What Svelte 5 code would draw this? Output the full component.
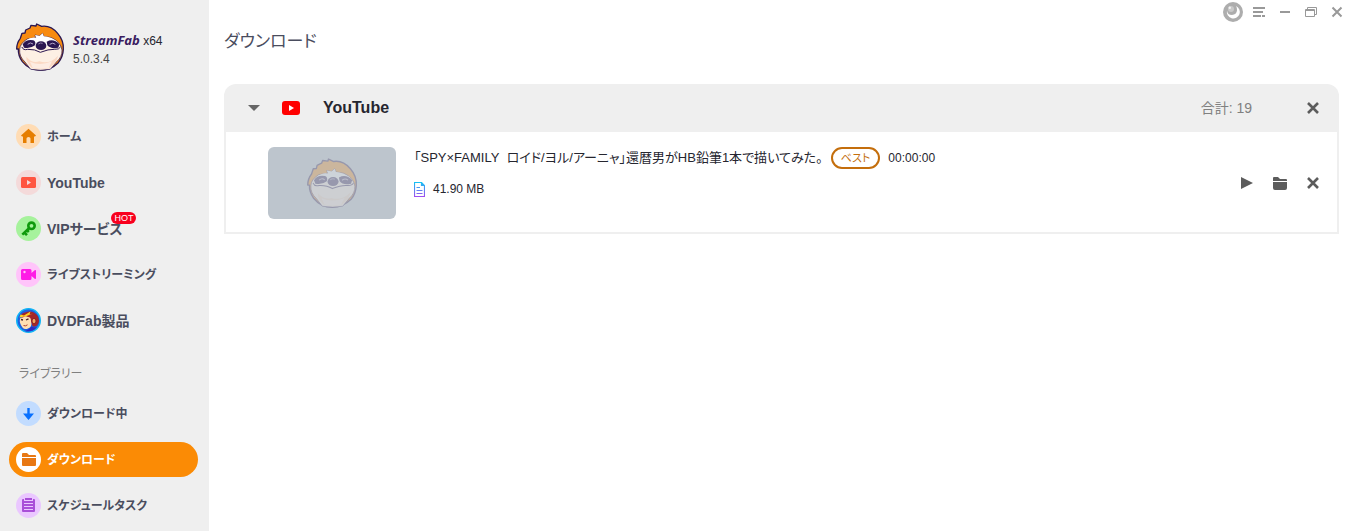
<script>
  const services = [
    { id: 'home', label: 'ホーム', kana: true },
    { id: 'youtube', label: 'YouTube' },
    { id: 'vip', label: 'VIPサービス', hot: true },
    { id: 'live', label: 'ライブストリーミング', kana: true },
    { id: 'dvdfab', label: 'DVDFab製品' }
  ];
  const library = [
    { id: 'downloading', label: 'ダウンロード中', kana: true },
    { id: 'downloaded', label: 'ダウンロード', kana: true },
    { id: 'schedule', label: 'スケジュールタスク', kana: true }
  ];
  let active = $state('downloaded');
  let open = $state(true);
</script>

{#snippet sloth()}
  <svg class="sloth" viewBox="15 15 150 150" aria-hidden="true">
    <path d="M20 96 Q20 78 31 64 L36 49 L45 48 L47 39 L60 33 L63 25 L78 27 L80 21 L95 28 Q122 24 143 49 Q162 71 160 97 Q159 120 145 137 Q121 160 91 160 Q58 160 37 134 Q24 116 25 96 Z" fill="#f88b10" stroke="#2b1751" stroke-width="4" stroke-linejoin="round" />
    <path d="M29 98 Q29 80 52 66 L77 62 L75 54 L88 57 L98 49 L101 58 L124 62 Q152 74 156 99 Q157 120 139 135 L121 157 Q91 162 62 157 L45 135 Q27 118 29 98 Z" fill="#fdf0e4" stroke="#2b1751" stroke-width="2" />
    <path d="M46 72 Q64 58 80 63 L75 54 L89 57 L98 49 L101 58 Q123 59 142 75 L133 88 L50 87 Z" fill="#fff" />
    <path d="M38 82 Q48 66 70 70 Q79 74 75 85 Q61 96 42 92 Z M110 74 Q131 63 148 82 L145 92 Q122 97 112 85 Z" fill="#2b1751" />
    <path d="M53 82 Q61 74 69 81 M119 82 Q129 75 136 82" fill="none" stroke="#b6a9cb" stroke-width="3" />
    <path d="M36 91 Q40 101 53 97 Q75 96 91 106 Q116 96 133 97 Q148 98 151 91" fill="none" stroke="#2b1751" stroke-width="3" stroke-linecap="round" />
    <ellipse cx="93" cy="86" rx="16" ry="13" fill="#2b1751" />
    <path d="M85 81 Q91 76 98 79" fill="none" stroke="#8f80aa" stroke-width="3" />
    <path d="M49 119 Q66 140 88 133 Q120 143 144 116 Q141 135 119 153 Q91 161 65 152 Q48 136 49 119 Z" fill="#fbd9c4" />
    <path d="M60 134 Q90 148 126 133 L116 153 Q90 158 68 152 Z" fill="#fdece2" />
  </svg>
{/snippet}

{#snippet cross()}
  <svg width="12" height="12" viewBox="0 0 12 12" aria-hidden="true"><path d="M1 1 11 11M11 1 1 11" fill="none" stroke="currentColor" stroke-width="2.6" /></svg>
{/snippet}

{#snippet navIcon(id)}
  <svg class="nav-icon" viewBox="0 0 25 25" aria-hidden="true">
    {#if id === 'home'}
      <circle cx="12.5" cy="12.5" r="12.5" fill="#ffdcb4" />
      <path d="M12.5 4.8 20 11.5 19 12.5H18V19H14.5V14.5Q14.5 13 12.5 13T10.5 14.5V19H7V12.5H6L5 11.5Z" fill="#e67e00" />
    {:else if id === 'youtube'}
      <circle cx="12.5" cy="12.5" r="12.5" fill="#f4dada" />
      <rect x="5" y="7" width="15" height="11" rx="1.5" fill="#ff5440" />
      <path d="M11 10v5l4-2.5Z" fill="#f4dada" />
    {:else if id === 'vip'}
      <circle cx="12.5" cy="12.5" r="12.5" fill="#a6f29c" />
      <circle cx="15.5" cy="9.8" r="3.2" fill="none" stroke="#0f9a0c" stroke-width="2.6" />
      <path d="M13 12.2 6.3 18.6M8.3 16.5 11 19.2M11 14.2 12.8 16" fill="none" stroke="#0f9a0c" stroke-width="2.6" />
    {:else if id === 'live'}
      <circle cx="12.5" cy="12.5" r="12.5" fill="#ffc4fa" />
      <path d="M6.5 7H14Q15.5 7 15.5 8.5V11L19 8Q20 7.6 20 9V16Q20 17.4 19 17L15.5 14V16.5Q15.5 18 14 18H6.5Q5 18 5 16.5V8.5Q5 7 6.5 7Z" fill="#ff1be6" />
      <circle cx="8.5" cy="10" r="1.2" fill="#ffc4fa" />
    {:else if id === 'dvdfab'}
      <circle cx="12.5" cy="12.5" r="11.7" fill="#1c5fe0" stroke="#10b4f6" stroke-width="1.6" />
      <path d="M4.5 9Q5 5 9 4.500Q15 2 20 6Q24 10 22.500 15Q20 20 16.500 18L15 14Z" fill="#a3262a" />
      <path d="M4 11Q4 9 7 9.500Q9 7.500 12 9Q15 9 15 13Q16.500 19 12 20.500Q8.500 22 6.500 19.500Q3 15 4 11Z" fill="#ffe0b2" />
      <path d="M3.500 9.500 4.500 6.500 8 7.500 14.500 3.500 13.500 6.500 17 5.500Q11 8.500 3.500 9.500Z" fill="#ffd21f" />
      <path d="M5 11.500 7 12M10 12 12.500 10.800" fill="none" stroke="#4a2020" stroke-width="1.300" />
      <path d="M7.500 17.500Q9.500 18.500 11.500 16.800" fill="none" stroke="#b04030" />
      <ellipse cx="18" cy="13" rx="2" ry="2.600" fill="#f3a765" stroke="#7c1a20" stroke-width=".8" />
      <path d="M9 23.500Q14 21 15.500 18.500Q19 20 21 19Q17 24 9 23.500Z" fill="#2d2bc0" />
    {:else if id === 'downloading'}
      <circle cx="12.5" cy="12.5" r="12.5" fill="#c2dcff" />
      <path d="M11.3 7H13.7V12.5H18L12.5 19 7 12.5H11.3Z" fill="#0870ff" />
    {:else if id === 'downloaded'}
      <circle cx="12.5" cy="12.5" r="12.5" fill="#fff" />
      <path d="M6 7Q6 6 7 6H11L13 8H19Q20 8 20 9V10H6Z M6 11H20V18Q20 19 19 19H7Q6 19 6 18Z" fill="#e87813" />
    {:else}
      <circle cx="12.5" cy="12.5" r="12.5" fill="#eac7ff" />
      <path d="M7 6H8V8H17V6H18Q19 6 19 7V18Q19 19 18 19H7Q6 19 6 18V7Q6 6 7 6ZM9 5H16V7H9Z" fill="#a94fd8" />
      <path d="M8 10.5H17M8 13.5H17M8 16.5H17" stroke="#eac7ff" />
    {/if}
  </svg>
{/snippet}

{#snippet navItem(item)}
  <li>
    <button class="nav-item" class:active={active === item.id} onclick={() => (active = item.id)}>
      {@render navIcon(item.id)}
      <span class="nav-label" class:kana={item.kana}>{item.label}{#if item.hot}<span class="hot">HOT</span>{/if}</span>
    </button>
  </li>
{/snippet}

<div class="app">
  <aside>
    <div class="brand">
      {@render sloth()}
      <div class="brand-text">
        <div><b>StreamFab</b> x64</div>
        <div class="version">5.0.3.4</div>
      </div>
    </div>
    <nav>
      <ul>
        {#each services as item}{@render navItem(item)}{/each}
      </ul>
      <h2>ライブラリー</h2>
      <ul>
        {#each library as item}{@render navItem(item)}{/each}
      </ul>
    </nav>
  </aside>

  <main>
    <div class="titlebar">
      <button aria-label="Theme">
        <svg width="20" height="20" viewBox="0 0 20 20"><circle cx="10" cy="10" r="10" fill="#adadad" /><path d="M13 4A6.500 6.500 0 1 1 4 8.500Q4.500 13 9 13Q13.500 12.500 14 8.500Q14.300 6 13 4Z" fill="#fff" /><circle cx="8" cy="7" r="3" fill="#c9c9c9" /><circle cx="6.800" cy="5.800" r="1.200" fill="#f2f2f2" /></svg>
      </button>
      <button aria-label="Menu">
        <svg width="12" height="12" viewBox="0 0 12 12"><path d="M0 2H12M0 6H10M0 10H8M9 10H12" stroke="#999" stroke-width="2" /></svg>
      </button>
      <button aria-label="Minimize">
        <svg width="12" height="12" viewBox="0 0 12 12"><path d="M1 6H11" stroke="#999" stroke-width="2" /></svg>
      </button>
      <button aria-label="Restore">
        <svg width="12" height="12" viewBox="0 0 12 12"><path d="M2.5 3V1.5H11.5V8.500H10M.5 3.500H9.500V10.500H.5ZM.5 4.500H9.500" fill="none" stroke="#999" /></svg>
      </button>
      <button aria-label="Close">
        <svg width="12" height="12" viewBox="0 0 12 12"><path d="M1.5 1.5 10.5 10.5M10.5 1.5 1.5 10.5" stroke="#999" stroke-width="2" /></svg>
      </button>
    </div>

    <h1>ダウンロード</h1>

    <section class="group">
      <header>
        <button class="toggle" aria-label="Toggle YouTube" aria-expanded={open} onclick={() => (open = !open)}>
          <svg width="12" height="6" viewBox="0 0 12 6"><path d="M0 0H12L6 6Z" fill="#666" /></svg>
        </button>
        <svg width="18" height="14" viewBox="0 0 18 14" aria-hidden="true"><rect width="18" height="14" rx="3" fill="#f00" /><path d="M7 4V10L12 7Z" fill="#fff" /></svg>
        <h3>YouTube</h3>
        <span class="total">合計: 19</span>
        <button class="icon" aria-label="Remove group">{@render cross()}</button>
      </header>
      {#if open}
        <article>
          <div class="thumb">{@render sloth()}</div>
          <div class="info">
            <div class="line">
              <span class="name">「SPY×FAMILY&nbsp; ロイド/ヨル/アーニャ」還暦男がHB鉛筆1本で描いてみた。</span>
              <span class="badge">ベスト</span>
              <span>00:00:00</span>
            </div>
            <div class="size">
              <svg width="11" height="15" viewBox="0 0 11 15" aria-hidden="true">
                <defs><linearGradient id="file" x1="0" y1="0" x2="0" y2="15" gradientUnits="userSpaceOnUse"><stop stop-color="#12c4f3" /><stop offset="1" stop-color="#a24bf0" /></linearGradient></defs>
                <path d="M.5 .5H7.5L10.5 3.5V14.5H.5ZM7.5 .5V3.5H10.5M2.5 5.5H6M2.5 8.5H8.5M2.5 11.5H8.5" fill="none" stroke="url(#file)" stroke-width="1.2" />
              </svg>
              <span>41.90 MB</span>
            </div>
          </div>
          <div class="actions">
            <button class="icon" aria-label="Play">
              <svg width="12" height="12" viewBox="0 0 12 12"><path d="M0 0 12 6 0 12Z" fill="currentColor" /></svg>
            </button>
            <button class="icon" aria-label="Open folder">
              <svg width="14" height="13" viewBox="0 0 14 13"><path d="M0 1Q0 0 1 0H5L7 2H13Q14 2 14 3V4H0ZM0 5H14V11Q14 13 12 13H2Q0 13 0 11Z" fill="currentColor" /></svg>
            </button>
            <button class="icon" aria-label="Remove">{@render cross()}</button>
          </div>
        </article>
      {/if}
    </section>
  </main>
</div>

<style>
  :global(body) { margin: 0; background: #fff; }
  .app {
    display: flex;
    min-height: 100vh;
    font-family: "Liberation Sans", "Noto Sans CJK JP", sans-serif;
    font-size: 12px;
    font-feature-settings: "palt";
    color: #26262f;
  }
  button {
    padding: 0;
    border: 0;
    background: none;
    color: inherit;
    font: inherit;
    font-feature-settings: inherit;
    cursor: pointer;
  }
  svg { display: block; flex: none; }
  h1, h2, h3, ul { margin: 0; padding: 0; list-style: none; }

  aside { flex: none; width: 209px; background: #efefef; }
  .brand { display: flex; gap: 8px; padding: 22px 0 0 15px; }
  .sloth { width: 50px; height: 50px; }
  .brand-text { padding-top: 9px; line-height: 18px; white-space: nowrap; }
  .brand-text b { font: italic 700 13px/18px "Open Sans", sans-serif; color: #3a1c60; }
  .version { color: #444; }
  nav { padding: 47px 11px 0 9px; }
  ul { display: flex; flex-direction: column; gap: 11px; }
  .nav-item {
    display: flex;
    align-items: center;
    gap: 6px;
    width: 100%;
    height: 35px;
    padding-left: 7px;
    border-radius: 18px;
    font-size: 14px;
    font-weight: 700;
    line-height: 20px;
    color: #4a4d5e;
    white-space: nowrap;
  }
  .nav-item.active { background: #fb8b05; color: #fff; }
  .nav-icon { width: 25px; height: 25px; }
  .nav-label { position: relative; }
  .kana { font-size: 12px; }
  .hot {
    position: absolute;
    right: -14px;
    top: -7px;
    padding: 0 3px;
    border-radius: 6px;
    background: #f8001e;
    color: #fff;
    font-size: 9px;
    font-weight: 400;
    line-height: 12px;
  }
  h2 { padding: 26px 0 12px 10px; font-size: 12px; font-weight: 400; line-height: 20px; color: #808080; }

  main { flex: 1; min-width: 0; padding: 0 17px 0 15px; }
  .titlebar { display: flex; justify-content: flex-end; align-items: center; gap: 14px; height: 24px; margin-right: -4px; }
  .titlebar button:first-child { margin-right: -4px; }
  h1 { font-size: 17px; font-weight: 400; line-height: 36px; color: #4a4d5e; }

  .group { margin-top: 24px; }
  header {
    display: flex;
    align-items: center;
    height: 48px;
    padding: 0 20px 0 24px;
    border-radius: 12px 12px 0 0;
    background: #efefef;
  }
  .toggle { margin-right: 22px; }
  h3 { margin-left: 23px; font-size: 16px; line-height: 20px; color: #26262f; }
  .total { margin: 0 55px 0 auto; font-size: 14px; line-height: 20px; color: #808080; }
  .icon { color: #5c5c5c; }
  article {
    display: flex;
    align-items: center;
    height: 98px;
    padding: 2px 18px 0 42px;
    border: 2px solid #efefef;
    border-top: 0;
  }
  .thumb {
    display: grid;
    place-items: center;
    flex: none;
    width: 128px;
    height: 72px;
    border-radius: 6px;
    background: #bdc5cd;
  }
  .thumb .sloth { width: 52px; height: 52px; opacity: 0.25; }
  .info { flex: 1; min-width: 0; align-self: flex-start; padding: 13px 0 0 18px; }
  .line { display: flex; align-items: center; height: 22px; gap: 8px; white-space: nowrap; }
  .name { font-size: 13px; line-height: 20px; }
  .badge { padding: 0 8px; border: 2px solid #c46e0c; border-radius: 11px; font-size: 11px; line-height: 18px; color: #c46e0c; }
  .size { display: flex; align-items: center; gap: 8px; height: 20px; margin-top: 10px; }
  .actions { display: flex; align-items: center; gap: 20px; }
</style>
